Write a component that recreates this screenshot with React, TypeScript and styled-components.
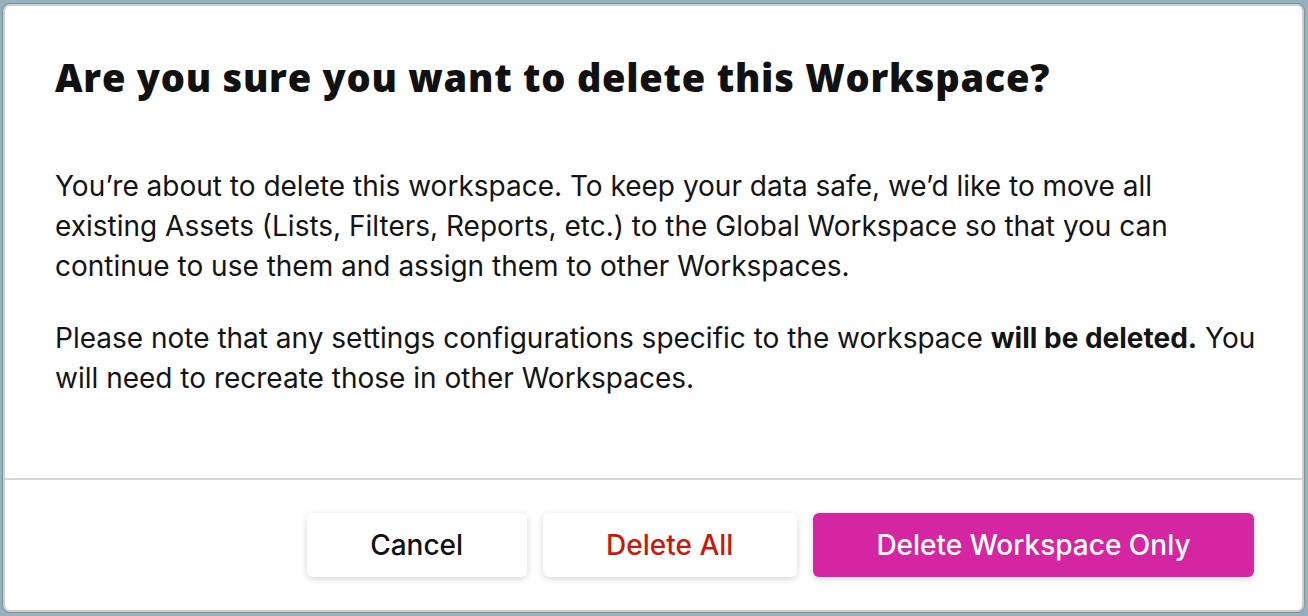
import React from "react";
import styled, { createGlobalStyle } from "styled-components";

const Global = createGlobalStyle`
  html, body { margin: 0; padding: 0; background: #95b1bf; }
  body { font-family: Inter, "Noto Sans", sans-serif; }
  * { box-sizing: border-box; }
`;

const Page = styled.div`
  width: 1308px;
  height: 616px;
  padding: 4px 4px 4px 3px;
  display: flex;
`;

const Dialog = styled.div`
  flex: 1;
  display: flex;
  flex-direction: column;
  background: #ffffff;
  border: 2px solid #cfcfcf;
  border-radius: 7px;
  box-shadow: 0 0 0 1px rgba(60, 60, 60, 0.25);
  overflow: hidden;
`;

const Body = styled.div`
  flex: 1;
  padding: 45px 30px 0 50px;
`;

const Title = styled.h1`
  margin: 0 0 63px 0;
  font-family: "Open Sans", Lato, sans-serif;
  font-weight: 800;
  font-size: 38px;
  line-height: 52px;
  color: #111111;
  letter-spacing: 0.75px;
`;

const Paragraph = styled.p`
  margin: 0 0 32px 0;
  font-family: Inter, sans-serif;
  font-size: 28px;
  line-height: 40px;
  color: #141414;
  white-space: nowrap;
`;

const Strong = styled.strong`
  font-weight: 700;
`;

const Footer = styled.div`
  border-top: 2px solid #d6d6d6;
  display: flex;
  justify-content: flex-end;
  gap: 16px;
  padding: 33px 48px 33px 0;
`;

type Variant = "plain" | "danger" | "primary";

const Button = styled.button<{ $variant: Variant }>`
  height: 64px;
  padding: 0 63.5px;
  border: none;
  border-radius: 6px;
  font-family: Inter, sans-serif;
  font-size: 28px;
  font-weight: 500;
  cursor: pointer;
  background: ${(p) => (p.$variant === "primary" ? "#d425a2" : "#ffffff")};
  color: ${(p) =>
    p.$variant === "primary" ? "#ffffff" : p.$variant === "danger" ? "#c81a0b" : "#111111"};
  box-shadow: 0 2px 7px rgba(0, 0, 0, 0.16);
`;

export default function App() {
  return (
    <>
      <Global />
      <Page>
        <Dialog>
          <Body>
            <Title>Are you sure you want to delete this Workspace?</Title>
            <Paragraph>
              You’re about to delete this workspace. To keep your data safe, we’d like to move all
              <br />
              existing Assets (Lists, Filters, Reports, etc.) to the Global Workspace so that you can
              <br />
              continue to use them and assign them to other Workspaces.
            </Paragraph>
            <Paragraph>
              Please note that any settings configurations specific to the workspace{" "}
              <Strong>will be deleted.</Strong> You
              <br />
              will need to recreate those in other Workspaces.
            </Paragraph>
          </Body>
          <Footer>
            <Button $variant="plain">Cancel</Button>
            <Button $variant="danger">Delete All</Button>
            <Button $variant="primary">Delete Workspace Only</Button>
          </Footer>
        </Dialog>
      </Page>
    </>
  );
}
